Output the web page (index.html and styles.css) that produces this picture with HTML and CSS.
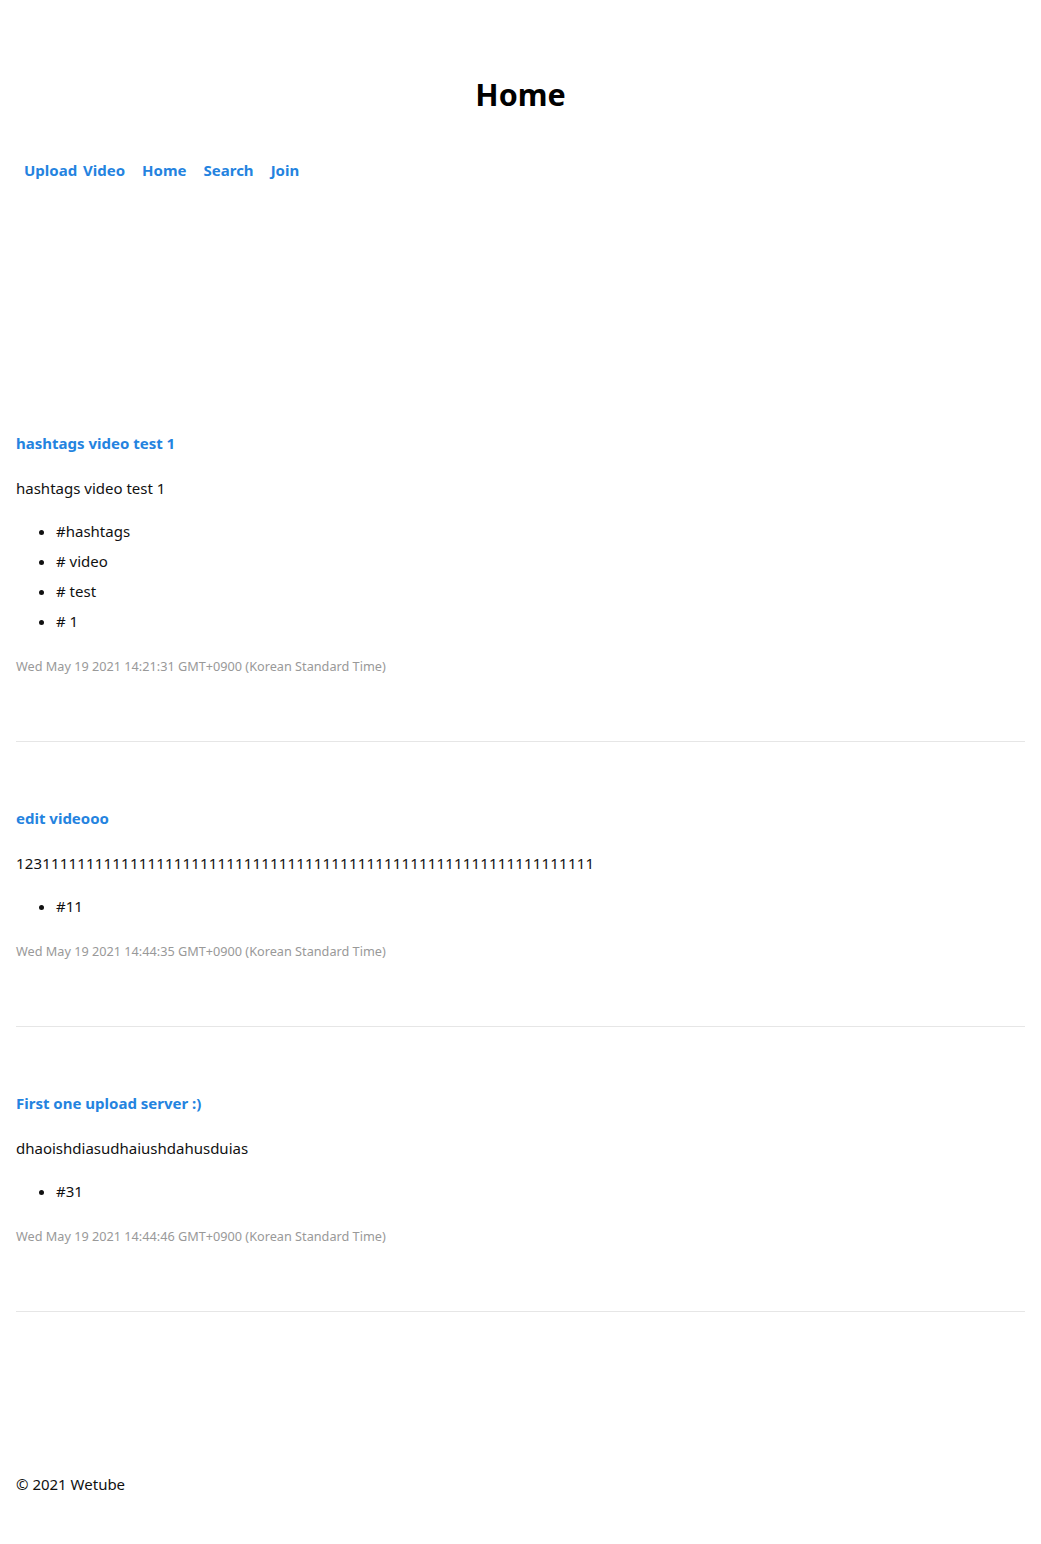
FILE: index.html
```html
<!DOCTYPE html>
<html lang="en">
<head>
<meta charset="utf-8">
<title>Home | Wetube</title>
<link rel="stylesheet" href="styles.css">
</head>
<body>
<div class="page">
  <header class="header">
    <h1 class="page-title">Home</h1>
    <nav class="nav">
      <a class="nav-link" href="#">Upload Video</a>
      <a class="nav-link" href="#">Home</a>
      <a class="nav-link" href="#">Search</a>
      <a class="nav-link" href="#">Join</a>
    </nav>
  </header>
  <main class="videos">
    <article class="video">
      <a class="video-title" href="#">hashtags video test 1</a>
      <p class="video-desc">hashtags video test 1</p>
      <ul class="tags">
        <li>#hashtags</li>
        <li># video</li>
        <li># test</li>
        <li># 1</li>
      </ul>
      <small class="video-date">Wed May 19 2021 14:21:31 GMT+0900 (Korean Standard Time)</small>
      <hr class="divider">
    </article>
    <article class="video">
      <a class="video-title" href="#">edit videooo</a>
      <p class="video-desc video-desc-digits">123111111111111111111111111111111111111111111111111111111111111111</p>
      <ul class="tags">
        <li>#11</li>
      </ul>
      <small class="video-date">Wed May 19 2021 14:44:35 GMT+0900 (Korean Standard Time)</small>
      <hr class="divider">
    </article>
    <article class="video">
      <a class="video-title" href="#">First one upload server :)</a>
      <p class="video-desc">dhaoishdiasudhaiushdahusduias</p>
      <ul class="tags">
        <li>#31</li>
      </ul>
      <small class="video-date">Wed May 19 2021 14:44:46 GMT+0900 (Korean Standard Time)</small>
      <hr class="divider">
    </article>
  </main>
  <footer class="footer">&copy; 2021 Wetube</footer>
</div>
</body>
</html>
```
FILE: styles.css
```css
html, body {
  margin: 0;
  padding: 0;
  background: #ffffff;
}
body {
  font-family: "Noto Sans", "Open Sans", sans-serif;
  font-size: 15px;
  color: #111111;
}
.page {
  padding: 0 16px;
}
.header {
  display: flex;
  flex-direction: column;
}
.page-title {
  margin: 74px 0 0;
  font-size: 30.5px;
  line-height: 40px;
  font-weight: 700;
  text-align: center;
  color: #000000;
}
.nav {
  display: flex;
  gap: 17px;
  margin-top: 46px;
  padding-left: 8px;
  line-height: 20px;
  word-spacing: 2px;
}
.nav-link,
.video-title {
  color: #2483df;
  font-weight: 700;
  text-decoration: none;
}
.videos {
  margin-top: 253px;
  display: flex;
  flex-direction: column;
}
.video {
  display: flex;
  flex-direction: column;
  align-items: flex-start;
}
.video-title {
  line-height: 20px;
  margin-bottom: 25px;
}
.video-desc {
  margin: 0 0 18px;
  line-height: 20px;
}
.video-desc-digits {
  letter-spacing: 0.18px;
}
.tags {
  margin: 0 0 22px;
  padding-left: 40px;
}
.tags li {
  line-height: 30px;
}
.video-date {
  font-size: 12.7px;
  line-height: 16px;
  color: #999999;
  margin-bottom: 67px;
}
.divider {
  align-self: stretch;
  margin: 0 0 66px;
  border: 0;
  border-top: 1px solid #e6e6e6;
}
.footer {
  margin-top: 96px;
  line-height: 20px;
  padding-bottom: 50px;
}
```
